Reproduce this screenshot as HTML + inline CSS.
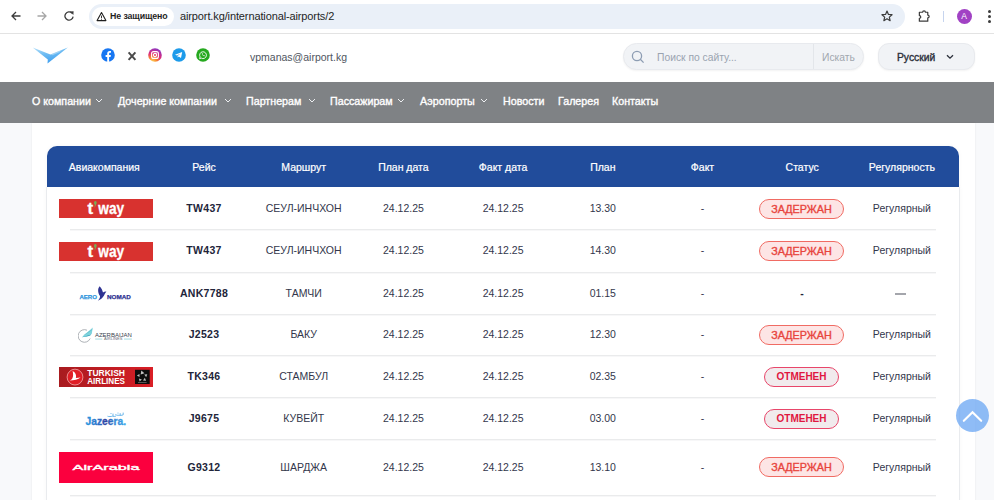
<!DOCTYPE html>
<html><head><meta charset="utf-8">
<style>
*{margin:0;padding:0;box-sizing:border-box}
html,body{width:994px;height:500px;overflow:hidden;background:#f8f9fb;font-family:"Liberation Sans",sans-serif}
.abs{position:absolute}
#chrome{position:absolute;left:0;top:0;width:994px;height:34px;background:#fff;border-bottom:1px solid #e3e3e3}
#omni{position:absolute;left:89px;top:4px;width:816px;height:25px;border-radius:13px;background:#eaf0f8}
#chip{position:absolute;left:3px;top:3px;width:82px;height:19px;border-radius:10px;background:#fff}
#chip span{position:absolute;left:18px;top:4px;font-size:8.8px;white-space:nowrap;font-weight:700;color:#1f1f1f;letter-spacing:-0.1px}
#url{position:absolute;left:91px;top:6px;font-size:11px;letter-spacing:-0.12px;color:#1f1f1f;white-space:nowrap}
#header{position:absolute;left:0;top:34px;width:994px;height:48px;background:#fff}
#nav{position:absolute;left:0;top:82px;width:994px;height:41px;background:#7f8285}
#nav span{position:absolute;top:12.5px;font-size:10.7px;color:#fff;white-space:nowrap;-webkit-text-stroke:0.35px #fff}
#nav svg{position:absolute;top:18px}
#content{position:absolute;left:32px;top:123px;width:943px;height:400px;background:#fff;box-shadow:0 0 2px rgba(0,0,0,0.08)}
#thead{position:absolute;left:47px;top:146px;width:912px;height:41px;background:#214c9b;border-radius:10px 10px 0 0;box-shadow:0 0 5px rgba(0,0,0,0.04)}
#tbody{position:absolute;left:46px;top:187px;width:914px;height:330px;background:#fff;border-left:1px solid #e9ebee;border-right:1px solid #e9ebee;box-shadow:0 0 5px rgba(0,0,0,0.035)}
.th{position:absolute;top:161px;width:100px;text-align:center;font-size:10.5px;color:#fff;white-space:nowrap;-webkit-text-stroke:0.2px #fff}
.sep{position:absolute;left:70px;width:866px;height:1px;background:#eaebec;box-shadow:0 1px 0 #f7f7f8}
.td{position:absolute;width:100px;text-align:center;font-size:10.5px;color:#33374c;white-space:nowrap}
.b{font-weight:700;color:#22253a;font-size:10.5px;letter-spacing:0.3px}
.badge{position:absolute;height:20px;border-radius:10px;text-align:center;font-size:10.5px;font-weight:700;line-height:18px}
.del{background:#fde5e5;border:1px solid #f06b63;color:#e8443c;font-weight:400;font-size:10.8px;-webkit-text-stroke:0.35px #e8443c}
.can{background:#f1ebed;border:1px solid #e8466a;color:#e0173f;font-size:10px}
</style></head><body>
<div id="chrome">
  <svg class="abs" style="left:11px;top:10.5px" width="10" height="10" viewBox="0 0 10 10"><path d="M9.5 5H1.2M5 1L1 5L5 9" stroke="#3c3c3c" stroke-width="1.3" fill="none"/></svg>
  <svg class="abs" style="left:37px;top:10.5px" width="10" height="10" viewBox="0 0 10 10"><path d="M0.5 5H8.8M5 1L9 5L5 9" stroke="#a6a6a6" stroke-width="1.3" fill="none"/></svg>
  <svg class="abs" style="left:64px;top:10.5px" width="10" height="10" viewBox="0 0 10 10"><path d="M8 2.2A4.1 4.1 0 1 0 9.1 5.6" stroke="#3c3c3c" stroke-width="1.3" fill="none"/><path d="M5.9 0.6L9.6 0.3L9.4 4z" fill="#3c3c3c"/></svg>
  <div id="omni">
    <div id="chip">
      <svg class="abs" style="left:4px;top:4px" width="11" height="11" viewBox="0 0 11 11"><path d="M5.5 1.6L9.9 9.6H1.1Z" stroke="#1f1f1f" stroke-width="1.1" fill="none" stroke-linejoin="round"/><path d="M5.5 4.6v2.4M5.5 7.7v1" stroke="#1f1f1f" stroke-width="0.9"/></svg>
      <span>Не защищено</span>
    </div>
    <div id="url">airport.kg/international-airports/2</div>
    <svg class="abs" style="left:792px;top:6px" width="12" height="12" viewBox="0 0 15 15"><path d="M7.5 1.3L9.3 5.5L13.8 5.9L10.4 8.9L11.4 13.4L7.5 11L3.6 13.4L4.6 8.9L1.2 5.9L5.7 5.5Z" stroke="#3c3c3c" stroke-width="1.5" fill="none" stroke-linejoin="round"/></svg>
  </div>
  <svg class="abs" style="left:917px;top:8.5px" width="15" height="14" viewBox="0 0 15 15"><path d="M2 3.5h3.5a1.5 1.5 0 0 1 3 0H11v3a1.5 1.5 0 0 1 0 3v3.5H2v-3a1.5 1.5 0 0 0 0-3z" stroke="#3c3c3c" stroke-width="1.3" fill="none" stroke-linejoin="round"/></svg>
  <div class="abs" style="left:943px;top:11px;width:1px;height:11px;background:#c6d4ee"></div>
  <div class="abs" style="left:956.5px;top:8.5px;width:15px;height:15px;border-radius:8px;background:#a142c4;color:#fff;font-size:8.5px;text-align:center;line-height:15px">A</div>
  <div class="abs" style="left:988px;top:10px;width:3px;height:3px;border-radius:2px;background:#3c3c3c"></div>
  <div class="abs" style="left:988px;top:15px;width:3px;height:3px;border-radius:2px;background:#3c3c3c"></div>
  <div class="abs" style="left:988px;top:20px;width:3px;height:3px;border-radius:2px;background:#3c3c3c"></div>
</div>

<div id="header">
  <svg class="abs" style="left:31px;top:11px" width="39" height="21" viewBox="0 0 39 21">
    <defs><linearGradient id="lg1" x1="0" y1="0" x2="0.45" y2="1"><stop offset="0" stop-color="#b4e0fa"/><stop offset="0.5" stop-color="#6bbaf2"/><stop offset="1" stop-color="#3f9ff0"/></linearGradient></defs>
    <path d="M1.7 2.5L19.4 9.4L36.8 2.5L26.7 10.5L16.5 18.6L16.8 14.5Z" fill="url(#lg1)"/>
    <path d="M19.8 9.3L31 5.1L28.5 7.3L21.5 10.2Z" fill="#fff" opacity="0.35"/>
  </svg>
  <svg class="abs" style="left:101px;top:14px" width="14" height="14" viewBox="0 0 14 14"><circle cx="7" cy="7" r="6.8" fill="#1877f2"/><path d="M9.6 8.9L9.9 7H8.1V5.8c0-.5.3-1 1.1-1h.8V3.2s-.7-.1-1.4-.1c-1.5 0-2.4.9-2.4 2.5V7H4.6v1.9h1.6V14h1.9V8.9z" fill="#fff"/></svg>
  <svg class="abs" style="left:127px;top:17px" width="10" height="10" viewBox="0 0 10 10"><path d="M1.6 1.3L8.4 8.9M8.4 1.3L1.6 8.9" stroke="#4a4a4a" stroke-width="2" stroke-linecap="butt"/></svg>
  <svg class="abs" style="left:148px;top:14px" width="14" height="14" viewBox="0 0 14 14">
    <defs><radialGradient id="ig" cx="0.3" cy="1" r="1.1"><stop offset="0" stop-color="#fdd45a"/><stop offset="0.3" stop-color="#f8862f"/><stop offset="0.6" stop-color="#dd2a7b"/><stop offset="1" stop-color="#7b3bd0"/></radialGradient></defs>
    <circle cx="7" cy="7" r="6.8" fill="url(#ig)"/><rect x="3.6" y="3.6" width="6.8" height="6.8" rx="2" stroke="#fff" stroke-width="1.1" fill="none"/><circle cx="7" cy="7" r="1.6" stroke="#fff" stroke-width="1.1" fill="none"/><circle cx="8.9" cy="5.1" r="0.45" fill="#fff"/></svg>
  <svg class="abs" style="left:172px;top:14px" width="14" height="14" viewBox="0 0 14 14"><circle cx="7" cy="7" r="6.8" fill="#1d9bea"/><path d="M3 6.8L10.2 4.1L9 10.1L6.7 8.6L5.7 9.6L5.6 8L8.6 5.4L5 7.6z" fill="#fff"/></svg>
  <svg class="abs" style="left:196px;top:14px" width="14" height="14" viewBox="0 0 14 14"><circle cx="7" cy="7" r="6.8" fill="#26a91f"/><path d="M3.6 10.6l.5-1.7A3.4 3.4 0 1 1 5.3 10.1z" stroke="#fff" stroke-width="0.9" fill="none"/><path d="M5.8 5.6c0 1.3 1.3 2.6 2.6 2.6l.5-.6-.8-.4-.4.4c-.6-.2-1.1-.7-1.3-1.3l.4-.4-.4-.8z" fill="#fff"/></svg>
  <div class="abs" style="left:250px;top:17px;font-size:10.5px;color:#4f5661;white-space:nowrap">vpmanas@airport.kg</div>
  <div class="abs" style="left:623px;top:9px;width:241px;height:27px;border-radius:14px;background:#f1f3f6;border:1px solid #e8eaee;box-shadow:0 1px 2px rgba(0,0,0,0.05)">
    <svg class="abs" style="left:7px;top:6px" width="14" height="14" viewBox="0 0 14 14"><circle cx="6" cy="6" r="4.6" stroke="#8d9db3" stroke-width="1.3" fill="none"/><path d="M9.3 9.3L12.6 12.6" stroke="#8d9db3" stroke-width="1.3"/></svg>
    <div class="abs" style="left:33px;top:7.5px;font-size:10.3px;color:#9aa3b0;white-space:nowrap">Поиск по сайту...</div>
    <div class="abs" style="left:189px;top:0;width:1px;height:25px;background:#e3e6ea"></div>
    <div class="abs" style="left:198px;top:7.5px;font-size:10.3px;color:#a1a7ae;white-space:nowrap">Искать</div>
  </div>
  <div class="abs" style="left:878px;top:9px;width:97px;height:27px;border-radius:11px;background:#f1f3f6;border:1px solid #e8eaee;box-shadow:0 1px 2px rgba(0,0,0,0.05)">
    <div class="abs" style="left:18px;top:7.5px;font-size:10.3px;color:#2b2f3a;white-space:nowrap;-webkit-text-stroke:0.35px #2b2f3a">Русский</div>
    <svg class="abs" style="left:67px;top:9.5px" width="8" height="6" viewBox="0 0 8 6"><path d="M1 1.2L4 4.2L7 1.2" stroke="#2b2f3a" stroke-width="1.3" fill="none"/></svg>
  </div>
</div>
<div id="nav"><span style="left:32px">О компании</span><svg style="left:95px;top:16px" width="8" height="5" viewBox="0 0 8 5"><path d="M1 1L4 4L7 1" stroke="#eef0f2" stroke-width="1" fill="none"/></svg><span style="left:118px">Дочерние компании</span><svg style="left:224px;top:16px" width="8" height="5" viewBox="0 0 8 5"><path d="M1 1L4 4L7 1" stroke="#eef0f2" stroke-width="1" fill="none"/></svg><span style="left:246px">Партнерам</span><svg style="left:308px;top:16px" width="8" height="5" viewBox="0 0 8 5"><path d="M1 1L4 4L7 1" stroke="#eef0f2" stroke-width="1" fill="none"/></svg><span style="left:330px">Пассажирам</span><svg style="left:397px;top:16px" width="8" height="5" viewBox="0 0 8 5"><path d="M1 1L4 4L7 1" stroke="#eef0f2" stroke-width="1" fill="none"/></svg><span style="left:420px">Аэропорты</span><svg style="left:480px;top:16px" width="8" height="5" viewBox="0 0 8 5"><path d="M1 1L4 4L7 1" stroke="#eef0f2" stroke-width="1" fill="none"/></svg><span style="left:503px">Новости</span><span style="left:558px">Галерея</span><span style="left:612px">Контакты</span></div>
<div id="content"></div>
<div id="thead"></div>
<div id="tbody"></div>
<div class="th" style="left:54.3px">Авиакомпания</div>
<div class="th" style="left:154.0px">Рейс</div>
<div class="th" style="left:253.7px">Маршрут</div>
<div class="th" style="left:353.4px">План дата</div>
<div class="th" style="left:453.1px">Факт дата</div>
<div class="th" style="left:552.8px">План</div>
<div class="th" style="left:652.5px">Факт</div>
<div class="th" style="left:752.2px">Статус</div>
<div class="th" style="left:851.9px">Регулярность</div>
<div class="sep" style="top:229px"></div>
<div class="sep" style="top:272px"></div>
<div class="sep" style="top:314px"></div>
<div class="sep" style="top:355px"></div>
<div class="sep" style="top:397px"></div>
<div class="sep" style="top:439px"></div>
<div class="sep" style="top:495px"></div>
<div class="td b" style="left:154.0px;top:202.0px">TW437</div>
<div class="td" style="left:253.7px;top:202.0px">СЕУЛ-ИНЧХОН</div>
<div class="td" style="left:353.4px;top:202.0px">24.12.25</div>
<div class="td" style="left:453.1px;top:202.0px">24.12.25</div>
<div class="td" style="left:552.8px;top:202.0px">13.30</div>
<div class="td" style="left:652.5px;top:202.0px">-</div>
<div class="badge del" style="left:759px;top:198.5px;width:85px">ЗАДЕРЖАН</div>
<div class="td" style="left:851.9px;top:202.0px">Регулярный</div>
<div class="td b" style="left:154.0px;top:244.0px">TW437</div>
<div class="td" style="left:253.7px;top:244.0px">СЕУЛ-ИНЧХОН</div>
<div class="td" style="left:353.4px;top:244.0px">24.12.25</div>
<div class="td" style="left:453.1px;top:244.0px">24.12.25</div>
<div class="td" style="left:552.8px;top:244.0px">14.30</div>
<div class="td" style="left:652.5px;top:244.0px">-</div>
<div class="badge del" style="left:759px;top:240.5px;width:85px">ЗАДЕРЖАН</div>
<div class="td" style="left:851.9px;top:244.0px">Регулярный</div>
<div class="td b" style="left:154.0px;top:286.5px">ANK7788</div>
<div class="td" style="left:253.7px;top:286.5px">ТАМЧИ</div>
<div class="td" style="left:353.4px;top:286.5px">24.12.25</div>
<div class="td" style="left:453.1px;top:286.5px">24.12.25</div>
<div class="td" style="left:552.8px;top:286.5px">01.15</div>
<div class="td" style="left:652.5px;top:286.5px">-</div>
<div class="td b" style="left:752.2px;top:286.5px">-</div>
<div class="abs" style="left:895px;top:293px;width:11px;height:2px;background:#a4a6ac"></div>
<div class="td b" style="left:154.0px;top:328.0px">J2523</div>
<div class="td" style="left:253.7px;top:328.0px">БАКУ</div>
<div class="td" style="left:353.4px;top:328.0px">24.12.25</div>
<div class="td" style="left:453.1px;top:328.0px">24.12.25</div>
<div class="td" style="left:552.8px;top:328.0px">12.30</div>
<div class="td" style="left:652.5px;top:328.0px">-</div>
<div class="badge del" style="left:759px;top:324.5px;width:85px">ЗАДЕРЖАН</div>
<div class="td" style="left:851.9px;top:328.0px">Регулярный</div>
<div class="td b" style="left:154.0px;top:370.0px">TK346</div>
<div class="td" style="left:253.7px;top:370.0px">СТАМБУЛ</div>
<div class="td" style="left:353.4px;top:370.0px">24.12.25</div>
<div class="td" style="left:453.1px;top:370.0px">24.12.25</div>
<div class="td" style="left:552.8px;top:370.0px">02.35</div>
<div class="td" style="left:652.5px;top:370.0px">-</div>
<div class="badge can" style="left:764px;top:366.5px;width:75px">ОТМЕНЕН</div>
<div class="td" style="left:851.9px;top:370.0px">Регулярный</div>
<div class="td b" style="left:154.0px;top:412.0px">J9675</div>
<div class="td" style="left:253.7px;top:412.0px">КУВЕЙТ</div>
<div class="td" style="left:353.4px;top:412.0px">24.12.25</div>
<div class="td" style="left:453.1px;top:412.0px">24.12.25</div>
<div class="td" style="left:552.8px;top:412.0px">03.00</div>
<div class="td" style="left:652.5px;top:412.0px">-</div>
<div class="badge can" style="left:764px;top:408.5px;width:75px">ОТМЕНЕН</div>
<div class="td" style="left:851.9px;top:412.0px">Регулярный</div>
<div class="td b" style="left:154.0px;top:460.5px">G9312</div>
<div class="td" style="left:253.7px;top:460.5px">ШАРДЖА</div>
<div class="td" style="left:353.4px;top:460.5px">24.12.25</div>
<div class="td" style="left:453.1px;top:460.5px">24.12.25</div>
<div class="td" style="left:552.8px;top:460.5px">13.10</div>
<div class="td" style="left:652.5px;top:460.5px">-</div>
<div class="badge del" style="left:759px;top:457.0px;width:85px">ЗАДЕРЖАН</div>
<div class="td" style="left:851.9px;top:460.5px">Регулярный</div>
<svg class="abs" style="left:59px;top:199px" width="94" height="19" viewBox="0 0 94 19"><rect width="94" height="19" fill="#d8322f"/><text x="28.4" y="14.6" font-family="Liberation Sans" font-weight="700" font-size="16.5" fill="#fff" textLength="5.6" lengthAdjust="spacingAndGlyphs" stroke="#fff" stroke-width="0.3">t</text><text x="39.3" y="14.6" font-family="Liberation Sans" font-weight="700" font-size="16.5" fill="#fff" textLength="25.9" lengthAdjust="spacingAndGlyphs" stroke="#fff" stroke-width="0.3">way</text><path d="M36.2 2C37.5 2 38 3.2 37.6 4.5L35.6 9L35.8 5.6C34.8 5 34.7 2 36.2 2Z" fill="#7aaa55"/></svg>
<svg class="abs" style="left:59px;top:241.6px" width="94" height="19" viewBox="0 0 94 19"><rect width="94" height="19" fill="#d8322f"/><text x="28.4" y="14.6" font-family="Liberation Sans" font-weight="700" font-size="16.5" fill="#fff" textLength="5.6" lengthAdjust="spacingAndGlyphs" stroke="#fff" stroke-width="0.3">t</text><text x="39.3" y="14.6" font-family="Liberation Sans" font-weight="700" font-size="16.5" fill="#fff" textLength="25.9" lengthAdjust="spacingAndGlyphs" stroke="#fff" stroke-width="0.3">way</text><path d="M36.2 2C37.5 2 38 3.2 37.6 4.5L35.6 9L35.8 5.6C34.8 5 34.7 2 36.2 2Z" fill="#7aaa55"/></svg>
<svg class="abs" style="left:78px;top:285px" width="54" height="17" viewBox="0 0 54 17">
 <text x="1.4" y="13.7" font-family="Liberation Sans" font-weight="700" font-size="6" fill="#2f95dc" stroke="#2f95dc" stroke-width="0.25" textLength="17.6" lengthAdjust="spacingAndGlyphs">AERO</text>
 <path d="M21.6 1.2C23.5 3 24.5 5.5 25 7.5C26 6.8 27 6.4 28.4 6.5C27.3 7.6 26.6 9 25.9 10.8C24.6 13 22.5 14.8 19.8 15.7C21.5 14 22.2 12.5 22 11C20.8 9.5 19.8 6.5 20.2 4C20.6 2.8 21 1.8 21.6 1.2Z" fill="#2f3392"/>
 <text x="28.9" y="13.7" font-family="Liberation Sans" font-weight="700" font-size="6" fill="#2f3392" stroke="#2f3392" stroke-width="0.25" textLength="23.9" lengthAdjust="spacingAndGlyphs">NOMAD</text>
</svg>
<svg class="abs" style="left:78px;top:327px" width="55" height="16" viewBox="0 0 55 16">
 <path d="M9 3.2A6.3 6.3 0 1 0 12.2 11.5" stroke="#a4a8ae" stroke-width="0.9" fill="none"/>
 <path d="M3.9 10.3L14.8 0.4L13.8 6.4Q12.6 9.4 3.9 10.3Z" fill="#7fd3dc"/><path d="M3.9 10.3L13.3 7.6Q12.8 9.2 3.9 10.3Z" fill="#2f9ab8"/><path d="M5.5 8.4L14.2 2.6" stroke="#4fb7c8" stroke-width="0.5"/>
 <text x="16.9" y="9.5" font-family="Liberation Sans" font-size="5.4" fill="#3b3f4e" textLength="37" lengthAdjust="spacingAndGlyphs">AZERBAIJAN</text>
 <rect x="17.2" y="11.6" width="7.1" height="0.9" fill="#9bd8de"/><rect x="46" y="11.6" width="7.9" height="0.9" fill="#9bd8de"/>
 <text x="26" y="13.4" font-family="Liberation Sans" font-size="3.3" fill="#6a6e78" textLength="18.4" lengthAdjust="spacingAndGlyphs">AIRLINES</text>
</svg>
<svg class="abs" style="left:59px;top:367px" width="94" height="20" viewBox="0 0 94 20">
 <defs><linearGradient id="tkg" x1="0" x2="1"><stop offset="0" stop-color="#a81b1f"/><stop offset="0.6" stop-color="#c41d23"/><stop offset="1" stop-color="#da1f26"/></linearGradient></defs>
 <rect width="94" height="20" fill="url(#tkg)"/>
 <circle cx="16" cy="10.1" r="7.9" fill="#e01e26" stroke="#f3a9ab" stroke-width="0.8"/>
 <path d="M13.6 3.9C16.6 5.3 17.6 8.4 16.9 10.9L21.6 10.4C19.2 12.5 15 13.4 10.8 13.5C13.4 12.4 15 9.8 13.6 3.9Z" fill="#fff"/>
 <text x="28.2" y="9" font-family="Liberation Sans" font-weight="700" font-size="8.2" fill="#fff" textLength="37.8" lengthAdjust="spacingAndGlyphs">TURKISH</text>
 <text x="28.2" y="17" font-family="Liberation Sans" font-weight="700" font-size="8.2" fill="#fff" textLength="37.8" lengthAdjust="spacingAndGlyphs">AIRLINES</text>
 <rect x="76" y="2.8" width="14.7" height="14.2" fill="#0d0d0d"/><path transform="rotate(0 83.3 9.6)" d="M81.7 7.4L85.4 6.3L82.3 3.6Z" fill="#c4c4c4"/><path transform="rotate(72 83.3 9.6)" d="M82 7.1L85 6.1L82.6 4.1Z" fill="#bdbdbd"/><path transform="rotate(144 83.3 9.6)" d="M82 7.1L85 6.1L82.6 4.1Z" fill="#bdbdbd"/><path transform="rotate(216 83.3 9.6)" d="M82 7.1L85 6.1L82.6 4.1Z" fill="#bdbdbd"/><path transform="rotate(288 83.3 9.6)" d="M82 7.1L85 6.1L82.6 4.1Z" fill="#bdbdbd"/>
 <rect x="79" y="15" width="8.6" height="0.6" fill="#888"/>
</svg>
<svg class="abs" style="left:84px;top:410px" width="46" height="18" viewBox="0 0 46 18">
 <defs><linearGradient id="jzg" x1="0" x2="1"><stop offset="0" stop-color="#2a9ae0"/><stop offset="0.35" stop-color="#2c6cc4"/><stop offset="0.5" stop-color="#2f3f9f"/><stop offset="0.7" stop-color="#3484d4"/><stop offset="1" stop-color="#3aa9ea"/></linearGradient></defs>
 <text x="1.6" y="15.4" font-family="Liberation Sans" font-weight="700" font-size="10.8" fill="url(#jzg)" stroke="url(#jzg)" stroke-width="0.35" textLength="40.4" lengthAdjust="spacingAndGlyphs">Jazeera.</text>
 <path d="M23.5 6.2C25 6.8 27 6.6 28.5 6.2C29.5 6.6 31 6.5 32 6M29 3.6V6.2M31.4 4.4C32 5 33.6 5.6 35 5.2C36 5.6 37.6 5.4 39.2 4.8V2.6M36.2 3.2V5.4" stroke="#4aa6e6" stroke-width="0.8" fill="none"/>
 <circle cx="27" cy="3.6" r="0.5" fill="#4aa6e6"/><circle cx="34" cy="3" r="0.5" fill="#4aa6e6"/>
</svg>
<svg class="abs" style="left:59px;top:452px" width="94" height="31" viewBox="0 0 94 31"><rect width="94" height="31" fill="#fb003e"/><text x="13.6" y="17.6" font-family="Liberation Sans" font-weight="400" font-size="6.6" fill="#fff" stroke="#fff" stroke-width="0.3" textLength="66.9" lengthAdjust="spacingAndGlyphs">AirArabia</text></svg>
<div class="abs" style="left:956px;top:399px;width:33px;height:33px;border-radius:17px;background:rgba(105,165,243,0.75)"><svg class="abs" style="left:6px;top:9.5px" width="21" height="14" viewBox="0 0 21 14"><path d="M1.8 11.8L10.5 3.2L19.2 11.8" stroke="#fff" stroke-width="2.1" fill="none" stroke-linecap="round"/></svg></div>


</body></html>
